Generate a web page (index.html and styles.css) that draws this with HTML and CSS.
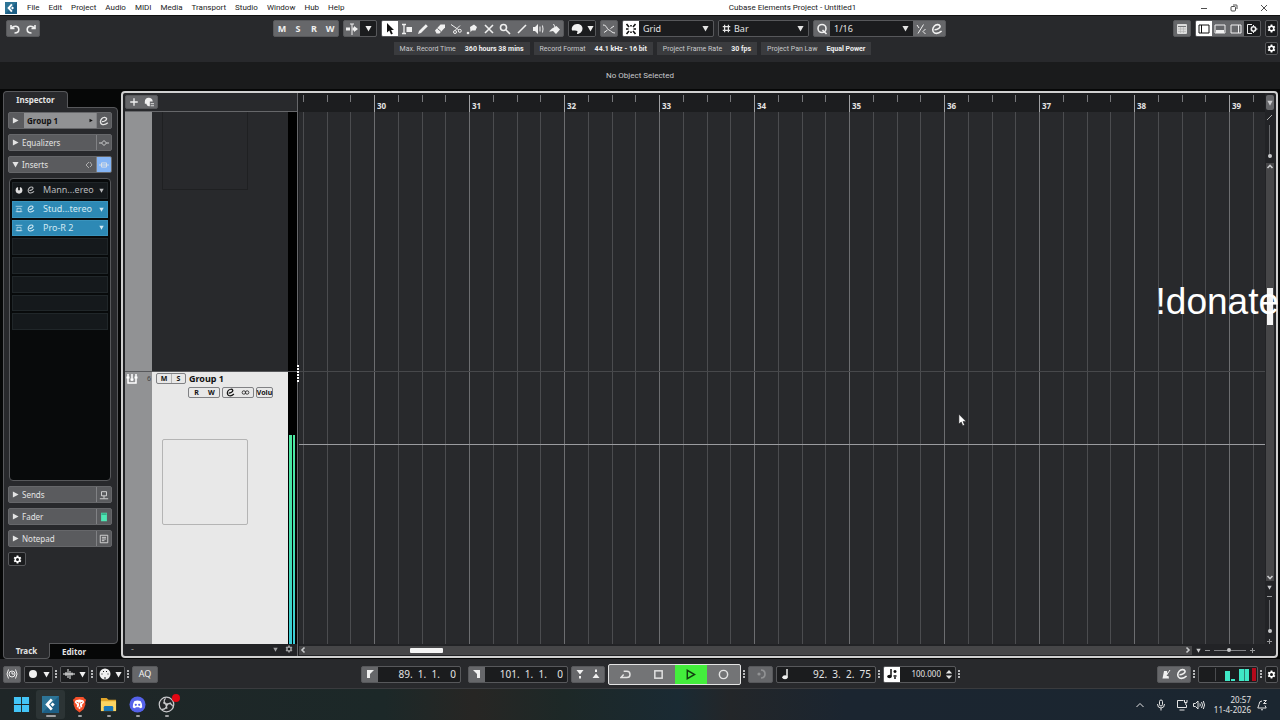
FILE: index.html
```html
<!DOCTYPE html>
<html lang="en">

<head>
    <meta charset="UTF-8">
    <meta name="viewport" content="width=device-width, initial-scale=1.0">
    <title>Cubase Elements Project - Untitled1</title>
    <link rel="stylesheet" href="styles.css">
</head>

<body>
    <!-- Shared icons -->
    <svg class="symbols" aria-hidden="true">
        <symbol id="gear" viewBox="0 0 12 12">
            <path d="M6 .8v10.4M1.5 3.4l9 5.2M1.5 8.6l9-5.2" stroke="currentColor" stroke-width="2.4" />
            <circle cx="6" cy="6" r="3" fill="none" stroke="currentColor" stroke-width="2" />
            <circle class="hole" cx="6" cy="6" r="2" />
        </symbol>
        <symbol id="edit-e" viewBox="0 0 12 12">
            <path d="M3.500 6.800C6 6.800 9.600 5 9 3 8.300 1 5 1.300 3.200 3.200 1.200 5.400 1.200 9 3.600 10c2.300.9 5-.2 7-2" fill="none" stroke="currentColor" stroke-width="1.600" />
        </symbol>
        <symbol id="down" viewBox="0 0 8 8">
            <path d="M.5 1h7L4 7.500z" fill="currentColor" />
        </symbol>
        <symbol id="right" viewBox="0 0 8 8">
            <path d="M1 .5v7L7.500 4z" fill="currentColor" />
        </symbol>
        <symbol id="cubase" viewBox="0 0 20 20">
            <rect width="20" height="20" fill="#1d5f86" />
            <path d="M0 0h20L0 20z" fill="#2d7496" />
            <path d="M11.500 4L6 10l5.500 6" fill="none" stroke="#fff" stroke-width="3.200" />
            <path d="M12.500 7.500l2.500 2.500-2.500 2.500L10 10z" fill="#fff" />
        </symbol>
    </svg>

    <header class="menubar">
        <svg class="app-logo"><use href="#cubase" /></svg>
        <nav class="menu">
            <a href="#">File</a>
            <a href="#">Edit</a>
            <a href="#">Project</a>
            <a href="#">Audio</a>
            <a href="#">MIDI</a>
            <a href="#">Media</a>
            <a href="#">Transport</a>
            <a href="#">Studio</a>
            <a href="#">Window</a>
            <a href="#">Hub</a>
            <a href="#">Help</a>
        </nav>
        <div class="window-title">Cubase Elements Project - Untitled1</div>
        <div class="window-buttons">
            <button aria-label="Minimize"><svg viewBox="0 0 8 8"><path d="M1 4.500h6" /></svg></button>
            <button aria-label="Restore"><svg viewBox="0 0 8 8"><rect x="1" y="2.500" width="4.500" height="4.500" rx="1" /><path d="M3 1h3.500q.5 0 .5.5V5" /></svg></button>
            <button aria-label="Close"><svg viewBox="0 0 8 8"><path d="M1 1l6 6M7 1L1 7" /></svg></button>
        </div>
    </header>

    <section class="toolbar">
        <div class="toolbar-left">
            <div class="group">
                <button aria-label="Undo"><svg viewBox="0 0 12 12"><path class="stroke" d="M2 2v3.500h3.500M2.500 5.200C5 2 9.800 3 9.800 6.500 9.800 8.500 8 10 5.500 10" /></svg></button>
                <button aria-label="Redo"><svg viewBox="0 0 12 12"><path class="stroke" d="M10 2v3.500H6.500M9.500 5.200C7 2 2.200 3 2.200 6.500 2.200 8.500 4 10 6.500 10" /></svg></button>
            </div>
        </div>
        <div class="toolbar-mid">
            <div class="group bold">
                <button>M</button>
                <button>S</button>
                <button>R</button>
                <button>W</button>
            </div>
            <div class="group">
                <button aria-label="Auto-scroll"><svg viewBox="0 0 12 12"><path d="M0 4.500h4v3H0zM8 4.500V3l4 3-4 3V7.500H6.500v-3z" fill="currentColor" /><path d="M4 1h4M6 1v11" stroke="currentColor" /></svg></button>
                <button class="dark" aria-label="Auto-scroll settings"><svg class="caret"><use href="#down" /></svg></button>
            </div>
            <div class="group tools">
                <button class="active" aria-label="Object selection"><svg viewBox="0 0 12 12"><path d="M3 0v9.500l2.300-2L7 11.500l1.800-.8-1.700-3.700H10z" fill="currentColor" /></svg></button>
                <button aria-label="Range selection"><svg viewBox="0 0 12 12"><path d="M1 1.500h4M1 10.500h4M3 1.500v9" stroke="currentColor" stroke-width="1.300" /><path d="M5.500 4H11v5H5.500z" fill="currentColor" /></svg></button>
                <button aria-label="Draw"><svg viewBox="0 0 12 12"><path d="M1 11l1-3 6.800-6.800 2 2L4 10z" fill="currentColor" /></svg></button>
                <button aria-label="Erase"><svg viewBox="0 0 12 12"><path d="M1 7.500l5.500-6h4.500v3l-5.500 6H2.500z" fill="currentColor" /><path d="M3.500 5.500l3.500 3" stroke="#66676a" /></svg></button>
                <button aria-label="Split"><svg viewBox="0 0 12 12"><path class="thin" d="M1 1.500l8 5.500M10 2.500L5.500 7" /><circle class="thin" cx="9.800" cy="7.800" r="1.500" /><circle class="thin" cx="5" cy="9" r="1.500" /></svg></button>
                <button aria-label="Glue"><svg viewBox="0 0 12 12"><path d="M4 4l4-2.500 3 2.500-1.500 3.500H6L4.500 9z" fill="currentColor" /><circle cx="2" cy="10" r="1.300" fill="currentColor" /></svg></button>
                <button aria-label="Mute"><svg viewBox="0 0 12 12"><path class="stroke" d="M2 2l8 8M10 2l-8 8" /></svg></button>
                <button aria-label="Zoom"><svg viewBox="0 0 12 12"><circle class="stroke" cx="4.500" cy="4.500" r="3" /><path class="stroke" d="M7 7l4 4" /></svg></button>
                <button aria-label="Line"><svg viewBox="0 0 12 12"><path class="stroke" d="M2 10l8-8" /></svg></button>
                <button aria-label="Play"><svg viewBox="0 0 12 12"><path d="M1 4h2l3-3v10L3 8H1z" fill="currentColor" /><path class="thin" d="M8 3.500v5M10.500 2.500q1 3.500 0 7" /></svg></button>
                <button aria-label="Color"><svg viewBox="0 0 12 12"><path d="M3 5.500L7.500 3 11 6.500l-4 4.500-3-3-2.500.5H0z" fill="currentColor" /><path class="thin" d="M4.500 1l2.500 5" /></svg></button>
            </div>
            <div class="group">
                <button class="dark wide" aria-label="Color menu">
                    <svg viewBox="0 0 12 12"><path d="M6 1C9.500 1 11.500 3 11.500 5.500c0 3-2.500 5.500-5.500 5.500l.5-3L4 7.500H1C0 4 2.500 1 6 1z" fill="currentColor" /><path d="M3 8.500l2 2" stroke="#1b1c1e" /></svg>
                    <svg class="caret"><use href="#down" /></svg>
                </button>
            </div>
            <div class="group">
                <button aria-label="Snap to zero crossing"><svg viewBox="0 0 12 12"><path class="thin" d="M0 2c4 0 3.500 4 6 5s3 3 6 3M7.500 5.500L11 3M1 9.500L4.500 7" /></svg></button>
            </div>
            <div class="group">
                <button class="active" aria-label="Snap on/off"><svg viewBox="0 0 12 12"><path class="stroke" d="M1.500 1l2.500 3M1.500 11L4 8M10.500 1L8 4M10.500 11L8 8M1 6h2.500M8.500 6H11M6 2v1.500M6 8.500V10" /></svg></button>
                <label class="picker picker-snap">
                    <select aria-label="Snap type"><option>Grid</option></select>
                    <svg class="caret"><use href="#down" /></svg>
                </label>
            </div>
            <div class="group">
                <label class="picker picker-grid">
                    <svg class="hash" viewBox="0 0 12 12"><path class="stroke" d="M3.500 1v10M8.500 1v10M1 3.500h10M1 8.500h10" /></svg>
                    <select aria-label="Grid type"><option>Bar</option></select>
                    <svg class="caret"><use href="#down" /></svg>
                </label>
            </div>
            <div class="group">
                <button aria-label="Quantize"><svg viewBox="0 0 12 12"><circle class="stroke" cx="6" cy="5.500" r="4" /><path class="stroke" d="M6.500 7l4 4" /></svg></button>
                <label class="picker picker-quantize">
                    <select aria-label="Quantize preset"><option>1/16</option></select>
                    <svg class="caret"><use href="#down" /></svg>
                </label>
                <button aria-label="Soft quantize"><svg viewBox="0 0 12 12"><path class="thin" d="M3 10.500l5.500-9M2 2l2 3M10.500 6L8 8.500l2.500 2.500" /></svg></button>
                <button aria-label="Quantize panel"><svg><use href="#edit-e" /></svg></button>
            </div>
        </div>
        <div class="toolbar-right">
            <div class="group">
                <button aria-label="Mix console"><svg viewBox="0 0 12 12"><path d="M1 2q0-1 1-1h8q1 0 1 1v8q0 1-1 1H2q-1 0-1-1z" fill="#dcdcdc" /><path d="M2 3.500h8" stroke="#77787a" /><path d="M2 6h8M2 8.500h8M4.500 4v6M7.500 4v6" stroke="#b0b0b0" stroke-width=".6" /></svg></button>
            </div>
            <div class="group">
                <button class="active" aria-label="Left zone"><svg viewBox="0 0 12 12"><path class="thin" d="M1 2h10v8H1zM3.500 2v8" /></svg></button>
                <button aria-label="Lower zone"><svg viewBox="0 0 12 12"><path class="thin" d="M1 2h10v8H1z" /><path d="M2 7h8v3H2z" fill="currentColor" /></svg></button>
                <button aria-label="Right zone"><svg viewBox="0 0 12 12"><path class="thin" d="M1 2h10v8H1zM8.500 2v8" /></svg></button>
                <button class="dark" aria-label="Window layout"><svg viewBox="0 0 12 12"><path class="thin" d="M6 1.500H1.500v9H6" /><circle class="stroke" cx="7.500" cy="6" r="2.200" /><path class="thin" d="M7.500 2v1M7.500 9v1M10 6h1.500" /></svg></button>
            </div>
            <button class="gear-btn" aria-label="Toolbar setup"><svg><use href="#gear" /></svg></button>
        </div>
    </section>

    <section class="status-line">
        <div class="status-items">
            <div class="status-item"><span>Max. Record Time</span><b>360 hours 38 mins</b></div>
            <div class="status-item"><span>Record Format</span><b>44.1 kHz - 16 bit</b></div>
            <div class="status-item"><span>Project Frame Rate</span><b>30 fps</b></div>
            <div class="status-item"><span>Project Pan Law</span><b>Equal Power</b></div>
        </div>
        <button class="gear-btn small" aria-label="Status line setup"><svg><use href="#gear" /></svg></button>
    </section>

    <section class="info-line">No Object Selected</section>

    <main class="workspace">
        <aside class="inspector">
            <div class="tabs-top"><button class="tab-top">Inspector</button></div>
            <div class="inspector-body">
                <div class="section selected">
                    <svg class="fold"><use href="#right" /></svg>
                    <span class="name">Group 1</span>
                    <svg class="more"><use href="#right" /></svg>
                    <button aria-label="Edit channel"><svg><use href="#edit-e" /></svg></button>
                </div>
                <div class="section">
                    <svg class="fold"><use href="#right" /></svg>
                    <span class="name">Equalizers</span>
                    <button aria-label="Bypass equalizers"><svg viewBox="0 0 12 12"><path class="thin" d="M0 6h3l3-3 3 3-3 3-3-3M9 6h3" /></svg></button>
                </div>
                <div class="section open">
                    <svg class="fold"><use href="#down" /></svg>
                    <span class="name">Inserts</span>
                    <svg class="preset" viewBox="0 0 8 8"><path class="thin" d="M4 1L1 4l3 3M5 1l2 3-2 2" /></svg>
                    <button class="on" aria-label="Bypass inserts"><svg viewBox="0 0 12 12"><path class="thin" d="M0 6h12M3 3.500h6v5H3z" /></svg></button>
                </div>
                <div class="inserts">
                    <div class="slots">
                        <div class="slot">
                            <svg viewBox="0 0 12 12"><circle cx="6" cy="6.500" r="5" fill="#ddd" /><path d="M6 0v6.500" stroke="#080a0b" stroke-width="2.500" /></svg>
                            <svg><use href="#edit-e" /></svg>
                            <span>Mann...ereo</span>
                            <svg class="caret"><use href="#down" /></svg>
                        </div>
                        <div class="slot used">
                            <svg viewBox="0 0 12 12"><path class="thin" d="M1 2h10M3 5h6v5H3zM1 10h10" /></svg>
                            <svg><use href="#edit-e" /></svg>
                            <span>Stud...tereo</span>
                            <svg class="caret"><use href="#down" /></svg>
                        </div>
                        <div class="slot used">
                            <svg viewBox="0 0 12 12"><path class="thin" d="M1 2h10M3 5h6v5H3zM1 10h10" /></svg>
                            <svg><use href="#edit-e" /></svg>
                            <span>Pro-R 2</span>
                            <svg class="caret"><use href="#down" /></svg>
                        </div>
                        <div class="slot"></div>
                        <div class="slot"></div>
                        <div class="slot"></div>
                        <div class="slot"></div>
                        <div class="slot"></div>
                    </div>
                </div>
                <div class="section">
                    <svg class="fold"><use href="#right" /></svg>
                    <span class="name">Sends</span>
                    <button aria-label="Bypass sends"><svg viewBox="0 0 12 12"><path class="thin" d="M3 2h6v5H3zM6 7v3M1 10.500h10" /></svg></button>
                </div>
                <div class="section">
                    <svg class="fold"><use href="#right" /></svg>
                    <span class="name">Fader</span>
                    <button aria-label="Show fader"><svg viewBox="0 0 12 12"><path d="M2.500 1h7v10h-7z" fill="#4fe6b4" /><path d="M3 2.500h6" stroke="#187a5c" /></svg></button>
                </div>
                <div class="section">
                    <svg class="fold"><use href="#right" /></svg>
                    <span class="name">Notepad</span>
                    <button aria-label="Show notepad"><svg viewBox="0 0 12 12"><path class="thin" d="M1.500 1.500h9v9h-9zM3.500 4h5M3.500 6h5M3.500 8h3" /></svg></button>
                </div>
                <button class="gear-btn setup" aria-label="Inspector setup"><svg><use href="#gear" /></svg></button>
            </div>
            <div class="tabs-bottom">
                <button class="tab-bottom current">Track</button>
                <button class="tab-bottom">Editor</button>
            </div>
        </aside>

        <section class="project">
            <div class="track-list">
                <div class="track-header">
                    <div class="group">
                        <button aria-label="Add track"><svg viewBox="0 0 12 12"><path class="stroke" d="M6 1.500v9M1.500 6h9" /></svg></button>
                        <button aria-label="Use track preset"><svg viewBox="0 0 12 12"><path d="M5.500 1a5 5 0 015 4.500H7V11C3.500 11 3 9 3 8H1V5.500C1 3 3 1 5.500 1z" fill="currentColor" /><path d="M8 8h4M8 10.500h4" stroke="currentColor" /></svg></button>
                    </div>
                </div>
                <div class="track track-upper">
                    <div class="gutter"></div>
                    <div class="track-panel"><div class="picture"></div></div>
                    <div class="meter"></div>
                </div>
                <div class="track track-group">
                    <div class="gutter">
                        <svg viewBox="0 0 12 12"><path d="M2 1v9h8V1M6 1v7" fill="none" stroke="#fff" stroke-width="1.500" /><path d="M.5 4.500h3M4.500 6.500h3M8.500 4.500h3" stroke="#fff" stroke-width="2" /></svg>
                        <span>6</span>
                    </div>
                    <div class="track-panel">
                        <div class="track-row">
                            <div class="light-group"><button>M</button><button>S</button></div>
                            <strong>Group 1</strong>
                        </div>
                        <div class="track-row second">
                            <div class="light-group"><button>R</button><button>W</button></div>
                            <div class="light-group">
                                <button aria-label="Edit channel settings"><svg><use href="#edit-e" /></svg></button>
                                <button aria-label="Channel configuration"><svg viewBox="0 0 12 12"><circle class="thin" cx="3.800" cy="6" r="2.300" /><circle class="thin" cx="8.200" cy="6" r="2.300" /></svg></button>
                            </div>
                            <div class="light-group"><button>Volu</button></div>
                        </div>
                        <div class="picture"></div>
                    </div>
                    <div class="meter"><i></i><i></i></div>
                </div>
                <div class="track-footer">
                    <span>-</span>
                    <svg class="caret"><use href="#down" /></svg>
                    <svg class="tiny-gear"><use href="#gear" /></svg>
                </div>
            </div>

            <div class="divider"><i></i></div>

            <div class="timeline">
                <div class="ruler">
                    <span>30</span><span>31</span><span>32</span><span>33</span><span>34</span>
                    <span>35</span><span>36</span><span>37</span><span>38</span><span>39</span>
                </div>
                <div class="lanes">
                    <div class="lane-upper"></div>
                    <div class="lane-group"><div class="automation"></div></div>
                </div>
                <div class="h-scroll">
                    <div class="h-track">
                        <svg viewBox="0 0 8 8"><path class="stroke" d="M5.500 1.500L3 4l2.500 2.500" /></svg>
                        <div class="h-thumb"></div>
                        <svg viewBox="0 0 8 8"><path class="stroke" d="M2.500 1.500L5 4 2.500 6.500" /></svg>
                    </div>
                    <svg class="zoom-caret"><use href="#down" /></svg>
                    <svg class="zoom-sign" viewBox="0 0 5 5"><path class="thin" d="M0 2.500h5" /></svg>
                    <input class="h-zoom" type="range" aria-label="Horizontal zoom" value="47">
                    <svg class="zoom-sign" viewBox="0 0 5 5"><path class="thin" d="M0 2.500h5M2.500 0v5" /></svg>
                </div>
            </div>

            <div class="v-scroll">
                <button class="ruler-menu" aria-label="Ruler menu"><svg><use href="#down" /></svg></button>
                <svg class="wave" viewBox="0 0 8 8"><path d="M1 7l5-5" stroke="#aaa" /></svg>
                <div class="v-zoom"><i></i></div>
                <div class="v-track">
                    <svg viewBox="0 0 8 8"><path class="stroke" d="M1.500 5L4 2.500 6.500 5" /></svg>
                    <div class="v-thumb"></div>
                    <svg viewBox="0 0 8 8"><path class="stroke" d="M1.500 3L4 5.500 6.500 3" /></svg>
                </div>
                <svg class="zoom-caret"><use href="#down" /></svg>
                <svg class="zoom-sign" viewBox="0 0 5 5"><path class="thin" d="M0 3.500h5" /></svg>
                <div class="v-zoom tall"><i></i></div>
                <svg class="zoom-sign" viewBox="0 0 5 5"><path class="thin" d="M0 2.500h5M2.500 0v5" /></svg>
            </div>
        </section>
    </main>

    <section class="transport">
        <div class="transport-left">
            <div class="group"><button aria-label="Constrain delay compensation"><svg viewBox="0 0 12 12"><circle class="thin" cx="6" cy="6" r="3" /><path class="thin" d="M6 4v2h2M2.500 1.500Q-.5 6 2.500 10.500M9.500 1.500q3 4.500 0 9" /></svg></button></div>
            <div class="group"><button class="dark wide" aria-label="Record mode"><svg viewBox="0 0 12 12"><circle cx="6" cy="6" r="4" fill="currentColor" /></svg><svg class="caret"><use href="#down" /></svg></button></div>
            <span class="grip"></span>
            <div class="group"><button class="dark wide" aria-label="Audio record mode"><svg viewBox="0 0 12 12"><path class="thin" d="M0 6h12M3 4v4M5 1v9M7 3v8M9 4.500v3" /></svg><svg class="caret"><use href="#down" /></svg></button></div>
            <span class="grip"></span>
            <div class="group"><button class="dark wide" aria-label="MIDI record mode"><svg viewBox="0 0 12 12"><circle cx="6" cy="6" r="5.500" fill="currentColor" /><path d="M2.500 6h1M4 3.500h1M7 3.500h1M8.500 6h1M5 10h2" stroke="#1b1c1e" stroke-width="1.200" /></svg><svg class="caret"><use href="#down" /></svg></button></div>
            <span class="grip"></span>
            <div class="group"><button class="aq">AQ</button></div>
        </div>
        <div class="transport-mid">
            <div class="group locator">
                <button aria-label="Go to left locator"><svg viewBox="0 0 12 12"><path d="M3 2h7L6 6v4H3z" fill="currentColor" /></svg></button>
                <input type="text" aria-label="Left locator" value="89.  1.  1.    0">
            </div>
            <div class="group locator">
                <button aria-label="Go to right locator"><svg viewBox="0 0 12 12"><path d="M9 2H2l4 4v4h3z" fill="currentColor" /></svg></button>
                <input type="text" aria-label="Right locator" value="101.  1.  1.    0">
            </div>
            <div class="group">
                <button aria-label="Punch in"><svg viewBox="0 0 12 12"><path d="M2.500 2h7L6 6.500zM5 8h2v2.500H5z" fill="currentColor" /></svg></button>
                <button aria-label="Punch out"><svg viewBox="0 0 12 12"><path d="M2.500 10h7L6 5.500zM5 1.500h2V4H5z" fill="currentColor" /></svg></button>
            </div>
            <div class="play-controls">
                <button aria-label="Cycle"><svg viewBox="0 0 12 12"><path class="stroke" d="M4 2.500h3.500a3.300 3.300 0 010 6.800H1M4 6L1 9.300h4" /></svg></button>
                <button aria-label="Stop"><svg viewBox="0 0 12 12"><rect class="stroke" x="2" y="2" width="8" height="8" /></svg></button>
                <button class="playing" aria-label="Start"><svg viewBox="0 0 12 12"><path class="stroke" d="M2.500 1.500v9L10.500 6z" /></svg></button>
                <button aria-label="Record"><svg viewBox="0 0 12 12"><circle class="stroke" cx="6" cy="6" r="4.500" /></svg></button>
            </div>
            <span class="grip"></span>
            <div class="group"><button class="wide faded" aria-label="Pre-roll"><svg viewBox="0 0 12 12"><circle cx="4" cy="6" r="1.600" fill="currentColor" /><path class="stroke" d="M6 2q4 0 4 4t-4 4" /></svg></button></div>
            <div class="group locator">
                <button class="dark" aria-label="Time format"><svg viewBox="0 0 12 12"><path d="M8 1v8" stroke="currentColor" stroke-width="1.500" /><ellipse cx="6" cy="9.300" rx="2.700" ry="2" fill="currentColor" /></svg></button>
                <input type="text" aria-label="Position" value="92.  3.  2.  75">
            </div>
            <span class="grip"></span>
            <div class="group tempo">
                <button class="active" aria-label="Tempo track"><svg viewBox="0 0 12 12"><path d="M5 1v7" stroke="currentColor" stroke-width="1.500" /><ellipse cx="3.500" cy="8.500" rx="2.300" ry="1.800" fill="currentColor" /><path d="M9 2v3M7.500 3.500h3M7.500 8h3" stroke="currentColor" stroke-width="1.500" /><circle cx="9" cy="10" r="1" fill="currentColor" /></svg></button>
                <input type="text" aria-label="Tempo" value="100.000">
                <svg class="spin" viewBox="0 0 8 12"><path d="M.5 5L4 1l3.500 4zM.5 7L4 11l3.500-4z" fill="currentColor" /></svg>
            </div>
            <span class="grip"></span>
        </div>
        <div class="transport-right">
            <div class="group">
                <button aria-label="Metronome"><svg viewBox="0 0 12 12"><path d="M4 3h3l.5 3L6 8h2.500L9 10.500H2.500z" fill="currentColor" /><path class="thin" d="M5.500 8.500L10 2" /></svg></button>
                <button aria-label="Metronome setup"><svg><use href="#edit-e" /></svg></button>
            </div>
            <span class="grip"></span>
            <svg class="performance" viewBox="0 0 60 17">
                <rect x=".5" y=".5" width="59" height="16" rx="1.500" fill="#1b1c1e" stroke="#5a5b5e" />
                <path d="M17.500 2v13" stroke="#4a4b4e" />
                <path d="M27 5h5v10h-5zM33 13h4v2h-4zM41 3h5v12h-5zM46.500 3h4.500v12h-4.500z" fill="#3fe8c6" />
                <path d="M54 2h4v13h-4z" fill="#b3091b" />
            </svg>
            <span class="grip"></span>
            <button class="gear-btn" aria-label="Transport setup"><svg><use href="#gear" /></svg></button>
        </div>
    </section>

    <footer class="taskbar">
        <div class="apps">
            <a href="#" aria-label="Start"><svg viewBox="0 0 18 18"><path d="M1 1h7.500v7.500H1zM9.500 1H17v7.500H9.500zM1 9.500h7.500V17H1zM9.500 9.500H17V17H9.500z" fill="#43c5f7" /></svg></a>
            <a href="#" class="running focused" aria-label="Cubase"><svg><use href="#cubase" /></svg></a>
            <a href="#" class="running" aria-label="Brave"><svg viewBox="0 0 18 18"><path d="M5 1h8l1.500 2 1.500 1-1 3 .3 2-2 5L9 17.500 4.700 14l-2-5L3 7 2 4l1.500-1z" fill="#f4502a" /><path d="M5 4.500l4-.8 4 .8 1 2-2.500 3 .5 1.500L9 14l-3-3 .5-1.500L4 6.500z" fill="#fff" /><path d="M6 6.500l2 1M12 6.500l-2 1M9 7v3.500M7.500 12l1.500-1 1.500 1" fill="none" stroke="#f4502a" /></svg></a>
            <a href="#" class="running" aria-label="File Explorer"><svg viewBox="0 0 18 18"><path d="M1 2h6l2 2h8v12H1z" fill="#e0a52a" /><path d="M1 5.500h16V16H1z" fill="#fcd462" /><path d="M4 16v-4q0-1.500 1.500-1.500h7q1.500 0 1.500 1.500v4z" fill="#1b77b8" /></svg></a>
            <a href="#" class="running" aria-label="Discord"><svg viewBox="0 0 18 18"><circle cx="9" cy="9" r="8.500" fill="#5562ea" /><path d="M5.500 5.500Q9 4 12.500 5.500 14.500 9 14 12q-1 1-2.500 1l-.7-1.200H7.200L6.500 13Q5 13 4 12 3.500 9 5.500 5.500z" fill="#fff" /><circle cx="7.200" cy="9.300" r="1.200" fill="#5562ea" /><circle cx="10.800" cy="9.300" r="1.200" fill="#5562ea" /></svg></a>
            <a href="#" class="running" aria-label="OBS Studio"><svg viewBox="0 0 18 18"><circle cx="9" cy="9" r="7.700" fill="#25272a" stroke="#c9cacc" stroke-width="1.300" /><path d="M8 2.500q-3 3 0 5.500 3 1 5.500-1M15.500 11q-1.500-4-5-2.500-2.500 2-1 5M4 14q4 .5 5-3 0-3-3.500-4" fill="none" stroke="#c9cacc" stroke-width="1.300" /></svg><span class="badge"></span></a>
        </div>
        <div class="tray">
            <svg viewBox="0 0 12 12"><path class="thin" d="M2.500 8L6 4.500 9.500 8" /></svg>
            <svg viewBox="0 0 12 12"><rect class="thin" x="4.500" y="1" width="3" height="6" rx="1.500" /><path class="thin" d="M2.500 5q0 4 3.500 4t3.500-4M6 9v2.500" /></svg>
            <svg viewBox="0 0 12 12"><path class="thin" d="M7.500 1.500h-6v7h9V6M3.500 11h5M8.500 1v2.500h2.500V1M9.800 3.500V6" /></svg>
            <svg viewBox="0 0 12 12"><path class="thin" d="M.5 4.500h2L5 2v8L2.500 7.500h-2zM6.800 4.500q1 1.500 0 3M8.500 3q2 3 0 6M10.300 2q2.500 4 0 8" /></svg>
            <div class="clock"><span>20:57</span><span>11-4-2026</span></div>
            <svg viewBox="0 0 12 12"><path class="thin" d="M6 2Q3 2 3 5.500L1.800 9h8.400L9 6.500M5 10.500q1 1 2 0M7.500 1.500h3l-3 3h3" /></svg>
        </div>
    </footer>

    <!-- Stream overlay and mouse pointer -->
    <div class="donate">!donate</div>
    <svg class="pointer" viewBox="0 0 10 15"><path d="M1 1v11l2.600-2.300L5.300 14l2-.9-1.700-4H9z" fill="#fff" stroke="#1b1c1e" stroke-width=".6" /></svg>
</body>

</html>
```
FILE: styles.css
```css
* {
    box-sizing: border-box;
    margin: 0;
    padding: 0;
}

body {
    display: flex;
    flex-direction: column;
    height: 100vh;
    overflow: hidden;
    position: relative;
    background-color: #060707;
    color: #e4e4e4;
    font-family: "Noto Sans", "Open Sans", sans-serif;
    font-size: 9px;
    line-height: 12px;
}

button,
input,
select {
    font: inherit;
    color: inherit;
    background: none;
    border: none;
    border-radius: 0;
    outline: none;
}

a {
    color: inherit;
    text-decoration: none;
}

svg {
    display: block;
    flex: none;
    width: 12px;
    height: 12px;
}

.symbols {
    position: absolute;
    width: 0;
    height: 0;
}

.stroke {
    fill: none;
    stroke: currentColor;
    stroke-width: 1.6;
}

.thin {
    fill: none;
    stroke: currentColor;
    stroke-width: 1;
}

.hole {
    fill: #1b1c1e;
}

.caret {
    width: 7px;
    height: 7px;
}

/* Menu bar */
.menubar {
    display: grid;
    grid-template-columns: auto 1fr auto 1fr;
    align-items: center;
    height: 15px;
    padding: 0 12px 0 5px;
    background-color: #fff;
    color: #222;
    font-family: Roboto, sans-serif;
    font-size: 8px;
}

.app-logo {
    margin-right: 10px;
}

.menu {
    display: flex;
    gap: 9px;
}

.window-title {
    padding-left: 290px;
}

.window-buttons {
    display: flex;
    justify-content: flex-end;
    gap: 22px;
}

.window-buttons svg {
    width: 8px;
    height: 8px;
    fill: none;
    stroke: #222;
    stroke-width: .8;
}

/* Toolbar */
.toolbar {
    display: grid;
    grid-template-columns: 267px 1fr auto;
    align-items: center;
    height: 26px;
    padding: 0 2px 0 6px;
    background-color: #28292c;
    border-top: 1px solid #111;
}

.toolbar-left,
.toolbar-mid,
.toolbar-right {
    display: flex;
    align-items: center;
    gap: 4px;
}

.group {
    display: flex;
    height: 17px;
    background-color: #66676a;
    border: 1px solid #57585b;
    border-radius: 2px;
    overflow: hidden;
}

.group button {
    display: flex;
    align-items: center;
    justify-content: center;
    width: 16px;
    height: 100%;
    color: #f0f0f0;
}

.bold {
    font-weight: 700;
}

.group .active {
    background-color: #fff;
    color: #111;
}

.group .dark {
    background-color: #1b1c1e;
}

.tools {
    width: 183px;
}

.tools button {
    flex: 1;
}

.group .wide {
    width: 26px;
    gap: 4px;
}

.picker {
    display: flex;
    align-items: center;
    gap: 3px;
    padding: 0 4px;
    background-color: #1b1c1e;
}

.picker select {
    flex: 1;
    min-width: 0;
    appearance: none;
}

.picker-snap {
    width: 74px;
}

.picker-grid {
    width: 89px;
    padding-left: 3px;
}

.picker-quantize {
    width: 83px;
}

.hash {
    width: 9px;
    height: 9px;
}

.gear-btn {
    display: flex;
    align-items: center;
    justify-content: center;
    width: 13px;
    height: 17px;
    background-color: #1b1c1e;
    border: 1px solid #57585b;
    border-radius: 2px;
    color: #fff;
}

.gear-btn svg {
    width: 9px;
    height: 9px;
}

.gear-btn.small {
    height: 13px;
}

/* Status and info lines */
.status-line {
    display: flex;
    align-items: center;
    height: 21px;
    padding: 0 2px 7px 0;
    background-color: #28292c;
    font-family: Roboto, sans-serif;
    font-size: 7px;
}

.status-items {
    flex: 1;
    display: flex;
    justify-content: center;
    gap: 4px;
}

.status-item {
    display: flex;
    gap: 9px;
    height: 13px;
    padding: 0 6px;
    background-color: #3a3b3e;
    color: #c9cacc;
    line-height: 14px;
}

.status-item b {
    color: #f0f0f0;
}

.info-line {
    height: 27px;
    background-color: #1a1b1c;
    color: #c9cacc;
    font-family: Roboto, sans-serif;
    font-size: 8px;
    line-height: 28px;
    text-align: center;
}

/* Workspace */
.workspace {
    flex: 1;
    min-height: 0;
    display: flex;
    gap: 3px;
    padding: 2px 2px 0 3px;
}

.inspector {
    display: flex;
    flex-direction: column;
    width: 115px;
}

.tabs-top {
    height: 16px;
}

.tab-top {
    width: 65px;
    height: 17px;
    position: relative;
    z-index: 1;
    background-color: #28292c;
    border: 1px solid #57585b;
    border-bottom: none;
    border-radius: 4px 4px 0 0;
    font-weight: 700;
    font-size: 8px;
}

.inspector-body {
    flex: 1;
    display: flex;
    flex-direction: column;
    gap: 5px;
    min-height: 0;
    padding: 4px 5px 0 4px;
    background-color: #28292c;
    border: 1px solid #57585b;
    border-radius: 0 4px 4px 0;
}

.section {
    display: flex;
    align-items: center;
    gap: 3px;
    height: 17px;
    padding-left: 3px;
    background-color: #5a5b5e;
    border: 1px solid #66676a;
    border-radius: 2px;
    overflow: hidden;
}

.section .name {
    flex: 1;
    font-size: 8px;
}

.section.selected .name {
    align-self: stretch;
    margin-left: 2px;
    margin-right: -10px;
    padding-left: 3px;
    background-color: #919294;
    color: #111;
    font-weight: 700;
    line-height: 15px;
}

.fold {
    width: 7px;
    height: 7px;
}

.more {
    width: 4px;
    height: 5px;
    color: #111;
}

.preset {
    width: 8px;
    height: 8px;
    opacity: .6;
}

.section button {
    display: flex;
    align-items: center;
    justify-content: center;
    width: 15px;
    height: 15px;
    border-left: 1px solid #808184;
}

.section button svg {
    width: 10px;
    height: 10px;
}

.section .on {
    background-color: #85b5f5;
}

.inserts {
    flex: none;
    height: 303px;
    margin: 0 1px;
    padding: 3px 2px;
    background-color: #080a0b;
    border: 1px solid #57585b;
    border-radius: 4px;
}

.slots {
    display: grid;
    grid-template-columns: minmax(0, 1fr);
    grid-auto-rows: 1fr;
    gap: 2px;
    height: 148px;
}

.slot {
    display: flex;
    align-items: center;
    gap: 4px;
    padding: 0 2px;
    background-color: #15191c;
    border: 1px solid #202629;
    color: #b9babc;
}

.slot svg {
    width: 8px;
    height: 8px;
}

.slot span {
    flex: 1;
    min-width: 0;
    padding-left: 4px;
    white-space: nowrap;
}

.slot .caret {
    width: 7px;
    height: 5px;
}

.slot.used {
    background-color: #2d89b5;
    border-color: #3a94bd;
    color: #d2e9f3;
}

.gear-btn.setup {
    width: 18px;
    height: 14px;
}

.tabs-bottom {
    display: flex;
    height: 15px;
}

.tab-bottom {
    flex: 1;
    padding-right: 20px;
    font-size: 8px;
    font-weight: 700;
}

.tab-bottom.current {
    flex: none;
    width: 47px;
    margin-top: -1px;
    padding-right: 0;
    background-color: #28292c;
    border: 1px solid #57585b;
    border-top: none;
    border-radius: 0 0 4px 4px;
}

/* Project window */
.project {
    flex: 1;
    min-width: 0;
    display: flex;
    margin-bottom: 1px;
    padding: 0 2px;
    background-color: #222326;
    border: 2px solid #d0d0d0;
    border-radius: 4px;
}

.track-list {
    display: flex;
    flex-direction: column;
    width: 172px;
}

.track-header {
    height: 19px;
    padding: 2px 0;
    background-color: #28292c;
    border-bottom: 1px solid #66676a;
}

.track-header .group {
    width: 33px;
    height: 14px;
}

.track-header svg {
    width: 10px;
    height: 10px;
}

.track {
    display: flex;
}

.track-upper {
    flex: 260;
    border-bottom: 1px solid #57585b;
}

.track-group {
    flex: 273;
}

.gutter {
    display: flex;
    justify-content: space-between;
    width: 27px;
    padding: 1px 1px 0;
    background-color: #919294;
    color: #444;
    font-size: 7px;
}

.track-panel {
    flex: 1;
    background-color: #28292c;
}

.track-group .track-panel {
    background-color: #e8e8e8;
    color: #111;
}

.track-upper .picture {
    width: 86px;
    height: 78px;
    margin-left: 10px;
    border: 1px solid #1f2022;
    border-top: none;
}

.track-group .picture {
    width: 86px;
    height: 86px;
    margin: 40px 0 0 10px;
    border: 1px solid #b4b4b4;
    border-radius: 2px;
}

.track-row {
    display: flex;
    align-items: center;
    gap: 3px;
    height: 13px;
    padding-left: 4px;
}

.track-row.second {
    gap: 2px;
    height: 14px;
    padding-left: 36px;
}

.light-group {
    display: flex;
    height: 11px;
    border: 1px solid #808184;
    border-radius: 2px;
}

.light-group button {
    display: flex;
    align-items: center;
    justify-content: center;
    width: 14px;
    height: 9px;
    font-size: 7px;
    font-weight: 700;
    line-height: 9px;
}

.light-group button + button {
    border-left: 1px solid #b4b4b4;
}

.second .light-group button {
    width: 15px;
    border: none;
}

.light-group svg {
    width: 9px;
    height: 9px;
}

.meter {
    display: flex;
    align-items: flex-end;
    gap: 1px;
    width: 9px;
    padding: 0 2px 0 1px;
    background-color: #000;
}

.meter i {
    flex: 1;
    height: 77%;
    background: linear-gradient(#4de8a0, #45e0ae 50%, #3cccd8);
}

.track-footer {
    display: flex;
    align-items: center;
    height: 12px;
    gap: 6px;
    padding: 0 4px 2px 6px;
    color: #a0a1a3;
}

.track-footer span {
    flex: 1;
}

.track-footer .caret {
    height: 5px;
}

.tiny-gear {
    width: 8px;
    height: 8px;
}

.divider {
    width: 2px;
    padding-top: 272px;
    background-color: #1b1c1e;
    border-left: 1px solid #66676a;
}

/* Drag handle between the track list and the events */
.divider i {
    display: block;
    width: 2px;
    height: 17px;
    margin-left: -1px;
    background: repeating-linear-gradient(#fff 0 2px, #1b1c1e 2px 3px);
}

.timeline {
    flex: 1;
    min-width: 0;
    display: flex;
    flex-direction: column;
}

/* One tile is one bar, 95px wide with four beats */
.ruler {
    display: flex;
    height: 19px;
    padding-left: 75px;
    overflow: hidden;
    background-color: #1c1d1f;
    background-image:
        linear-gradient(90deg, #a0a1a3 1px, transparent 1px),
        linear-gradient(90deg, transparent 24px, #77787b 24px 25px, transparent 25px 48px, #77787b 48px 49px, transparent 49px 71px, #77787b 71px 72px, transparent 72px);
    background-size: 95px 17px, 95px 7px;
    background-position: 75px 2px;
    background-repeat: repeat-x;
}

.ruler span {
    flex: none;
    width: 95px;
    padding: 7px 0 0 3px;
    font-size: 8px;
    font-weight: 700;
}

.lanes {
    flex: 1;
    display: flex;
    flex-direction: column;
    background-color: #28292c;
    background-image: linear-gradient(90deg, #6c6d70 1px, transparent 1px 24px, #4b4c4f 24px 25px, transparent 25px 48px, #4b4c4f 48px 49px, transparent 49px 71px, #4b4c4f 71px 72px, transparent 72px);
    background-size: 95px 100%;
    background-position-x: 75px;
}

.lane-upper {
    flex: 260;
    border-bottom: 1px solid #47484b;
}

.lane-group {
    flex: 273;
}

.automation {
    height: 27%;
    border-bottom: 1px solid #9b9ca0;
}

.h-scroll {
    display: flex;
    align-items: center;
    gap: 4px;
    height: 12px;
    padding-right: 10px;
    color: #c9cacc;
}

.h-track {
    flex: 1;
    display: flex;
    align-items: center;
    height: 9px;
    background-color: #464648;
}

.h-track svg,
.v-track svg {
    width: 8px;
    height: 8px;
}

.h-thumb {
    width: 33px;
    height: 5px;
    margin: 0 auto 0 11.5%;
    background-color: #f4f4f4;
    border-radius: 1px;
}

.zoom-caret,
.zoom-sign {
    width: 5px;
    height: 5px;
}

.zoom-sign {
    opacity: .7;
}

.h-zoom {
    width: 32px;
    height: 8px;
    appearance: none;
    background: linear-gradient(#808184, #808184) center / 100% 1px no-repeat;
}

.h-zoom::-webkit-slider-thumb {
    appearance: none;
    width: 4px;
    height: 4px;
    background-color: #c9cacc;
    border-radius: 50%;
}

.v-scroll {
    display: flex;
    flex-direction: column;
    align-items: center;
    width: 9px;
    padding: 2px 0 12px;
    color: #c9cacc;
}

.ruler-menu {
    width: 8px;
    height: 15px;
    background-color: #66676a;
    border-radius: 2px;
}

.ruler-menu svg {
    width: 6px;
    height: 6px;
    margin: 0 auto;
}

.wave {
    width: 8px;
    height: 8px;
    margin: 3px 0 4px;
}

.v-zoom {
    display: flex;
    align-items: flex-end;
    justify-content: center;
    width: 1px;
    height: 33px;
    margin-bottom: 5px;
    background-color: #66676a;
}

.v-zoom i {
    flex: none;
    width: 4px;
    height: 4px;
    background-color: #c9cacc;
    border-radius: 50%;
}

.v-zoom.tall {
    margin: 2px 0 6px;
}

.v-track {
    flex: 1;
    display: flex;
    flex-direction: column;
    align-items: center;
    width: 8px;
    margin-bottom: 4px;
    background-color: #464648;
}

.v-thumb {
    width: 6px;
    height: 37px;
    margin: 117px 0 auto;
    background-color: #f4f4f4;
}

.v-track + .zoom-caret {
    margin-bottom: 3px;
}

/* Transport */
.transport {
    display: grid;
    grid-template-columns: 358px 1fr auto;
    align-items: center;
    height: 30px;
    padding: 1px 2px 0 3px;
    background-color: #28292c;
    border-bottom: 1px solid #3a3b3e;
}

.transport-left,
.transport-mid,
.transport-right {
    display: flex;
    align-items: center;
    gap: 3px;
}

.transport-left .wide {
    width: 27px;
}

.grip {
    width: 2px;
    height: 8px;
    margin-left: -1px;
    background: repeating-linear-gradient(#b9babc 0 2px, transparent 2px 3px);
}

.group .aq {
    width: 24px;
}

.transport-mid .group:first-child {
    margin-right: 4px;
}

.locator {
    width: 100px;
}

.locator input,
.tempo input {
    flex: 1;
    min-width: 0;
    padding-right: 4px;
    background-color: #1b1c1e;
    font-size: 10px;
    text-align: right;
    white-space: pre;
}

.tempo {
    width: 73px;
}

.tempo input {
    padding-right: 2px;
    font-size: 8px;
}

.spin {
    width: 12px;
    height: 15px;
    padding: 2px;
    background-color: #1b1c1e;
}

.play-controls {
    display: flex;
    width: 133px;
    height: 21px;
    background-color: #737476;
    border: 1px solid #e4e4e4;
    border-radius: 2px;
}

.play-controls button {
    flex: 1;
    display: flex;
    align-items: center;
    justify-content: center;
}

.play-controls svg {
    width: 11px;
    height: 11px;
}

.play-controls .playing {
    background-color: #43ee3c;
    color: #123f10;
}

.group .faded {
    width: 23px;
    color: #919294;
}

.performance {
    width: 60px;
    height: 17px;
}

/* Taskbar */
.taskbar {
    display: flex;
    justify-content: space-between;
    height: 31px;
    padding: 0 12px 0 7px;
    background: linear-gradient(90deg, #1f2627, #1c2828 30%, #272624 37%, #1d2827 44%, #1a2a33 53%, #232629 57%, #1b2530 66%, #1b2630);
}

.apps,
.tray {
    display: flex;
    align-items: center;
}

.apps a {
    position: relative;
    display: flex;
    flex-direction: column;
    align-items: center;
    gap: 2px;
    width: 29px;
    height: 29px;
    padding-top: 6px;
}

.apps svg {
    width: 17px;
    height: 17px;
}

.running::after {
    content: "";
    width: 4px;
    height: 2px;
    background-color: #a0a1a3;
    border-radius: 1px;
}

.focused {
    background-color: #2c3435;
    border-radius: 3px;
}

.focused::after {
    width: 10px;
}

.badge {
    position: absolute;
    top: 4px;
    right: 1px;
    width: 8px;
    height: 8px;
    background-color: #e30613;
    border-radius: 50%;
}

.tray {
    gap: 5px;
}

.tray svg:nth-child(-n + 2),
.tray svg:nth-child(4) {
    margin-right: 4px;
}

.clock {
    display: flex;
    flex-direction: column;
    align-items: flex-end;
    font-size: 8px;
    line-height: 10px;
}

/* Overlays */
.donate {
    position: absolute;
    top: 281px;
    right: 1px;
    color: #fff;
    font-family: "Liberation Sans", sans-serif;
    font-size: 37px;
    line-height: 42px;
}

.pointer {
    position: absolute;
    top: 413px;
    left: 958px;
    width: 9px;
    height: 14px;
}
```
